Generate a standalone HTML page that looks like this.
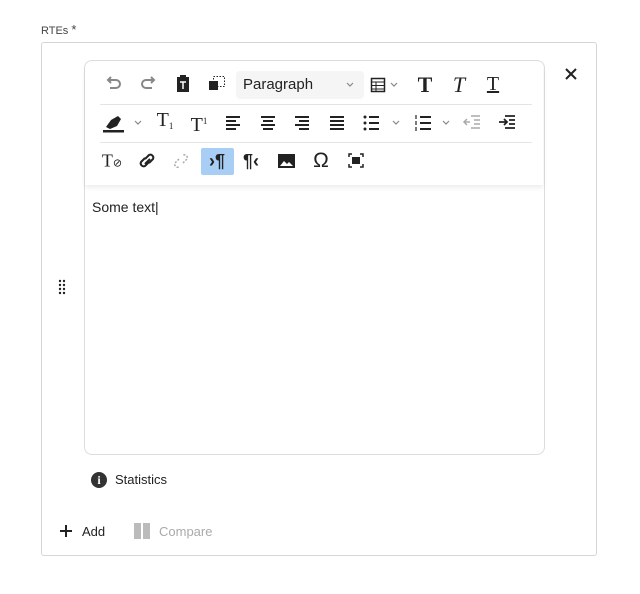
<!DOCTYPE html>
<html><head><meta charset="utf-8"><style>
body{margin:0;width:640px;height:594px;background:#fff;font-family:"Liberation Sans",sans-serif;position:relative;overflow:hidden;color:#222}
.a{position:absolute}
.lbl{left:41px;top:22px;font-size:11px;color:#444}
.outer{left:41px;top:42px;width:554px;height:512px;border:1px solid #d5d5d5;border-radius:3px}
.ed{left:84px;top:60px;width:459px;height:393px;border:1px solid #ddd;border-radius:8px}
.tb{left:85px;top:61px;width:458px;height:124px;box-shadow:0 3px 5px rgba(0,0,0,.07);border-radius:8px 8px 0 0;background:#fff}
.sep{left:100px;width:432px;height:1px;background:#e4e4e4}
.i{position:absolute;font-size:18px;color:#222;line-height:20px;text-align:center;transform:translate(-50%,-50%)}
.sel{left:236px;top:71px;width:128px;height:28px;background:#f5f5f5;border-radius:4px;font-size:15px;line-height:28px}
svg{position:absolute;overflow:visible}
</style></head><body>
<div class="a lbl">RTEs <span style="font-size:13px">*</span></div>
<div class="a outer"></div>
<div class="a ed"></div>
<div class="a tb"></div>
<div class="a sep" style="top:104px"></div>
<div class="a sep" style="top:142px"></div>
<div class="a sel"><span style="margin-left:7px">Paragraph</span></div>
<svg width="640" height="594" style="left:0;top:0" fill="none" stroke-linecap="butt">
<!-- chevrons -->
<g stroke="#888" stroke-width="1.2">
<path d="M347 83l3 3 3-3"/><path d="M391 83l3 3 3-3"/><path d="M135 121l3 3 3-3"/><path d="M393 121l3 3 3-3"/><path d="M443 121l3 3 3-3"/>
</g>
<!-- undo/redo -->
<g stroke="#888" stroke-width="2">
<path d="M108 80h8a4 4 0 0 1 0 8h-6"/><path d="M111 77l-3 3 3 3"/>
<path d="M154 80h-8a4 4 0 0 0 0 8h6"/><path d="M151 77l3 3-3 3"/>
</g>
<!-- paste -->
<rect x="177" y="77" width="12" height="15" fill="#222"/><rect x="180" y="75" width="6" height="3" fill="#222"/>
<path d="M180 82h6M183 82v7" stroke="#fff" stroke-width="1.5"/>
<!-- copy format -->
<rect x="209" y="81" width="9" height="9" fill="#222"/><rect x="213.5" y="76.5" width="11" height="10" stroke="#222" stroke-dasharray="1.5 1.5"/>
<!-- table -->
<rect x="371.5" y="78.5" width="13" height="13" stroke="#222" stroke-width="1.5"/><path d="M372 82h12M372 85.5h12M372 89h12M376 82v9" stroke="#222"/>
<!-- highlighter -->
<path d="M106 127l5-7 7-4 3 3-4 7-7 3z" fill="#222"/><rect x="103" y="130" width="21" height="2.5" fill="#222"/>
<!-- align -->
<g stroke="#222" stroke-width="2">
<path d="M226 117h14M226 121h10M226 125h14M226 129h10"/>
<path d="M261 117h14M263 121h10M261 125h14M263 129h10"/>
<path d="M295 117h14M299 121h10M295 125h14M299 129h10"/>
<path d="M330 117h14M330 121h14M330 125h14M330 129h14"/>
<path d="M369 117h10M369 123h10M369 129h10"/>
<path d="M420 117h11M420 123h11M420 129h11"/>
</g>
<g fill="#222"><circle cx="365" cy="117" r="1.5"/><circle cx="365" cy="123" r="1.5"/><circle cx="365" cy="129" r="1.5"/></g>
<path d="M416 115v4M416 121v4M416 127v4" stroke="#222" stroke-width="1.2"/>
<!-- indent -->
<g stroke="#aaa" stroke-width="1.5"><path d="M471 116h9M474 120h6M474 124h6M471 128h9M464 122h6M467 119l-3 3 3 3"/></g>
<g stroke="#222" stroke-width="1.8"><path d="M505 116h10M509 120h6M509 124h6M505 128h10M499 122h7M504 119l3 3-3 3"/></g>
<!-- link -->
<g stroke="#222" stroke-width="2"><path d="M145 158l-4 4a3 3 0 0 0 4 4l4-4"/><path d="M149 163l4-4a3 3 0 0 0-4-4l-4 4"/><path d="M145 164l5-5"/></g>
<g stroke="#aaa" stroke-width="1.5" stroke-dasharray="2 1.5"><path d="M179 159l-4 4a3 3 0 0 0 4 4"/><path d="M183 163l4-4a3 3 0 0 0-4-4"/></g>
<!-- image -->
<rect x="278" y="154" width="17" height="14" fill="#222"/><path d="M280 166l4-5 3 3 2-2 4 4z" fill="#fff"/>
<!-- fullscreen -->
<path d="M349 157v-3h3M360 154h3v3M363 164v3h-3M352 167h-3v-3" stroke="#222" stroke-width="1.5"/><rect x="352" y="157" width="8" height="7" fill="#222"/>
<!-- close -->
<path d="M566 69l10 10M576 69l-10 10" stroke="#222" stroke-width="2"/>
<!-- grip -->
<g fill="#222"><circle cx="60" cy="281" r="1.2"/><circle cx="64" cy="281" r="1.2"/><circle cx="60" cy="285" r="1.2"/><circle cx="64" cy="285" r="1.2"/><circle cx="60" cy="289" r="1.2"/><circle cx="64" cy="289" r="1.2"/><circle cx="60" cy="293" r="1.2"/><circle cx="64" cy="293" r="1.2"/></g>
<!-- plus -->
<path d="M66 525v12M60 531h12" stroke="#222" stroke-width="2"/>
</svg>
<div class="i" style="left:425px;top:85px;font-family:'Liberation Serif';font-weight:bold;font-size:22px">T</div>
<div class="i" style="left:459px;top:85px;font-family:'Liberation Serif';font-style:italic;font-size:22px">T</div>
<div class="i" style="left:493px;top:84px;font-family:'Liberation Serif';font-size:20px;text-decoration:underline">T</div>
<div class="i" style="left:165px;top:123px;font-family:'Liberation Serif';font-size:20px">T<span style="font-size:9px;vertical-align:-3px">1</span></div>
<div class="i" style="left:199px;top:123px;font-family:'Liberation Serif';font-size:20px">T<span style="font-size:9px;vertical-align:7px">1</span></div>
<div class="i" style="left:112px;top:162px;font-family:'Liberation Serif';font-size:18px">T<span style="font-size:11px">&#x2298;</span></div>
<div class="a" style="left:201px;top:148px;width:33px;height:27px;background:#a8cef5;border-radius:2px"></div>
<div class="i" style="left:217px;top:161px;font-weight:bold">&#x203A;&#xB6;</div>
<div class="i" style="left:251px;top:161px;font-weight:bold">&#xB6;&#x2039;</div>
<div class="i" style="left:321px;top:161px;font-size:21px">&#x3A9;</div>
<div class="a" style="left:92px;top:199px;font-size:14px">Some text<span style="font-weight:normal">|</span></div>
<div class="a" style="left:91px;top:472px;width:16px;height:16px;border-radius:50%;background:#333;color:#fff;font-size:12px;font-weight:bold;text-align:center;line-height:16px;font-family:'Liberation Serif'">i</div>
<div class="a" style="left:115px;top:472px;font-size:13px">Statistics</div>
<div class="a" style="left:82px;top:524px;font-size:13px">Add</div>
<div class="a" style="left:134px;top:523px;width:7px;height:16px;background:#bbb"></div>
<div class="a" style="left:143px;top:523px;width:7px;height:16px;background:#bbb"></div>
<div class="a" style="left:159px;top:524px;font-size:13px;color:#aaa">Compare</div>
</body></html>
